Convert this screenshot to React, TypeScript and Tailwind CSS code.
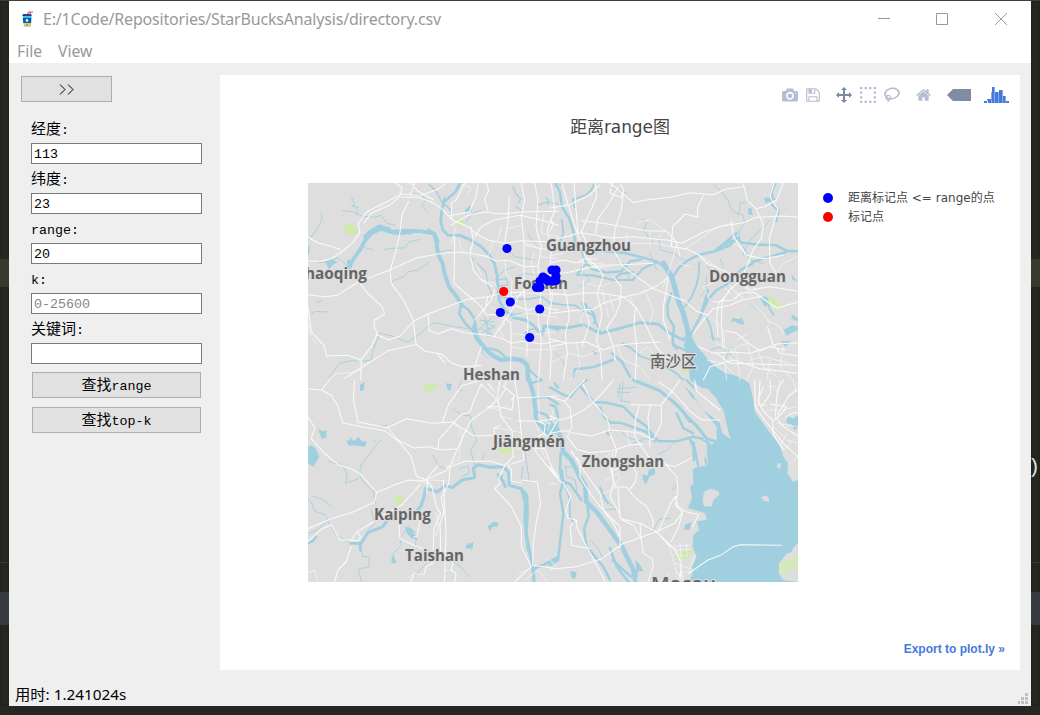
import React from "react";

type Line = [width: number, d: string];
type Tile = { x: number; y: number; water: Line[]; lakes: string; parks: string; roads: string; minor: string };

const northWest: Tile = {
  x: 0,
  y: -3,
  water: [
    [11, "M122 262L140 232L158 206L172 180L190 160L218 146L250 156L300 152L340 154L378 160L386 190L390 222L404 250L410 282L424 322L446 350L462 376"],
    [9, "M362 150L382 165L390 185M170 170L185 155L215 138L245 148M240 155L270 160L310 158"],
    [7, "M462 376L482 390L500 418L503 450M458 378L454 402L472 430L498 456L506 482"],
    [13, "M500 440L506 472L526 500L550 524L580 540L610 536L640 540L658 555L660 600"],
    [6, "M545 505L570 512L592 530M655 560L680 585L700 600"],
    [8, "M456 10L442 36L408 66L402 90L398 120L404 150L420 166L456 166L488 180L520 200L545 226L560 252L568 290L570 330L574 362L590 392L620 414L652 420L676 436L690 452L704 462L708 438L730 442L750 448"],
    [4, "M574 350L610 356L660 358L700 350L722 366L750 372M362 12L384 34L402 66L430 92M404 68L410 52"],
    [3, "M614 20L626 44L638 58L632 68M712 52L724 64L718 74M692 74L718 66L750 72M570 300L595 295L600 314L570 320M650 460L672 446L690 450M600 396L620 404L640 400M480 220L506 250L534 276L540 318L555 350"],
    [2, "M104 92L138 96L160 108L200 112L220 106L236 130L262 136M130 50L140 74L130 78L152 82M140 76L150 96L146 106M0 180L24 152L42 118L40 98M118 258L90 232L60 246L30 248M230 208L270 204L290 204L304 186L336 178M250 304L288 290L300 276L330 270L362 248M160 200L196 210M10 400L22 394L60 396M26 366L44 362"],
    [2, "M60 596L94 550L130 542L158 544L190 540L195 510L216 460L252 468L300 486L330 466L360 440L380 428L430 438L500 450M314 40L342 46L352 60L342 76L360 98M384 222L420 210L438 215M520 460L560 436M514 444L552 464M530 410L540 470M516 420L560 426M510 450L554 410"],
    [2, "M560 300L590 270L620 260M626 290L650 280L690 286M600 210L620 230L680 240M660 160L680 190M640 110L640 90L622 80M470 130L484 112L496 100L520 90M520 500L524 520L540 536M546 448L560 442L536 426L548 470M508 406L490 450"],
  ],
  lakes: "M52 244L72 238L88 246L74 256L62 268ZM116 242L128 238L132 264L120 260ZM470 90L488 76L492 92L474 102ZM0 196L5 200L4 222L0 225Z",
  parks: "M108 138L120 129L138 136L152 150L142 164L126 168L108 152ZM442 118L466 113L468 134L450 138L440 130Z",
  roads:
    "M0 172L30 188L74 200L96 208M0 242L40 244L70 236L100 216L132 190L156 158L150 132L176 96L240 64L280 42L308 44L340 46L390 28L410 12M168 128L190 100L244 76L276 50L282 22L264 10M282 52L330 52L370 66L404 88L432 120L480 140L506 162L540 180L590 190L640 182L750 186M308 44L320 10M302 66L282 104L276 156L262 222L246 270L250 310L288 362L316 420L324 492L352 514L400 522L430 548L462 560L520 556M0 344L52 350L88 346L150 306L192 290L246 270L324 234L390 222L440 216L488 220L540 230L566 244L600 240L650 260L690 258M152 306L180 340L222 380L230 402L200 420L198 440L208 460L190 500L160 538L158 600M208 464L242 480L276 468L316 424L360 402L430 376L480 358L540 350L580 340L650 336M360 402L364 452L390 462L430 446L470 458L540 466L580 474L610 490L640 484L700 492L750 482M322 494L240 512L180 550L150 570L108 596M0 380L10 456L48 496L56 528L120 526L160 540M440 168L438 310L490 354L520 380L534 404L574 404L608 428L610 490L608 540M488 140L496 180L486 220L496 270L520 300L556 320M590 190L600 128L604 52M540 92L530 56L542 34L536 10M510 10L504 50L484 96L420 108M378 60L330 34L310 10M470 10L444 60L430 70L432 120M430 135L480 106L530 96L580 102L640 96L750 94M500 170L520 140L560 120L600 112L636 106L700 120L750 136M560 466L582 432L610 394L630 350L650 330L686 300L720 286L750 286M500 420L526 390L550 360L560 330M540 350L530 390M656 196L700 206L750 210M640 10L650 60L640 110L648 180L648 290L650 360L660 420L656 530M680 10L690 60L684 140L700 200L690 260L700 330L690 420L700 480L692 600M730 10L740 90L718 150L730 210L722 300L730 370L718 430L730 520L726 600M600 370L660 390L700 380L750 390M520 500L500 560L480 600M608 540L606 600M386 520L400 536L410 548",
  minor:
    "M520 300L560 310L580 346L620 350L660 340L750 344M590 240L594 280L612 300L610 350L604 394M610 410L660 400L700 404L750 414M610 460L660 466L740 456M610 500L660 510L750 506M640 300L690 306L750 300M678 220L670 250L680 290M650 190L680 195M700 230L750 236M706 106L700 160L750 170M580 140L570 180M640 135L600 146M460 12L490 24L480 40M444 140L430 190M454 180L460 210L484 226M500 240L520 286M550 380L570 400L590 430L574 450L586 470M0 432L10 470L26 490M150 540L170 554L155 570M58 600L90 580L130 578L158 566M556 184L540 230",
};

const northEast: Tile = {
  x: 242,
  y: -3,
  water: [
    [7, "M16 10L30 36L36 80L58 116L70 154L78 196L100 220L126 218M100 222L160 214L220 218L270 230L318 244L344 260L364 290"],
    [15, "M340 250L352 270L366 292L376 330L386 366L400 400L414 454L414 490L440 510L460 540"],
    [7, "M370 288L388 262L412 242L448 224L500 212L540 196L562 172L574 188L630 194L680 196L708 212L744 214M500 208L526 188L550 166L560 160M525 194L544 182L552 186M608 246L640 236L674 226L708 216"],
    [6, "M100 226L108 250L128 268L170 278L214 274L240 244L274 238M108 250L80 284L128 286L190 300L248 300L278 266L318 246M190 300L210 282L250 276"],
    [8, "M0 440L50 444L100 434L150 460L206 446L270 428L324 432L360 460L400 480"],
    [7, "M364 340L352 374L354 410L372 440L368 486L380 506M432 444L450 412L474 358L500 330L536 310L572 270L608 250M450 412L460 380L474 330M430 450L418 470"],
    [5, "M448 246L446 288L438 320L424 352L404 380M0 370L36 374L74 376L102 394L128 404L150 456M120 384L136 410L132 430M216 490L240 502L270 528L320 546L380 580L400 600"],
    [7, "M676 10L666 34L666 74L686 92L678 124M654 58L672 58M186 520L216 546L240 590M70 590L76 568L128 562L188 540M370 496L400 508L430 520"],
    [5, "M74 82L68 58L106 46L124 30L132 12M36 120L40 160L28 190M650 354L658 384L670 404M468 410L480 436L490 480"],
    [2, "M490 12L514 36L536 64L544 90L566 102L572 70L600 60M560 100L580 106L584 132L568 150L568 180M274 116L290 130L280 150L310 190M470 260L500 280L520 260L510 236M590 360L620 390M480 470L510 480M16 20L40 10M16 520L36 538L44 558M660 120L632 150L600 180L578 226M180 20L230 40M90 270L120 300L90 320M200 236L240 270M300 220L320 270M326 174L332 210L370 220L400 240M470 290L468 330L450 350M580 200L600 240L640 250M480 510L510 500L550 530M220 250L240 300M540 500L520 560"],
  ],
  lakes:
    "M594 86L604 84L608 104L596 104ZM642 54L656 52L662 66L646 68ZM546 414L570 418L574 410L584 434L562 430L556 424L544 426ZM700 450L726 436L744 440V450L722 460L710 468ZM726 404L744 414V424L724 416ZM692 484L724 484L706 500ZM644 346L630 354L644 380L654 374ZM400 470L426 470L440 500L464 528L484 552L506 568L512 600H470L450 550L420 520ZM126 512L144 518L134 526ZM724 284L732 292L740 304L728 300ZM92 366L112 372L116 390L104 392Z",
  parks: "M650 346L670 354L700 378L690 384L656 374L644 356ZM394 572L430 564L440 568L420 580L402 578Z",
  roads:
    "M0 84L60 74L76 66L120 44L150 14M36 10L50 60L72 130L82 160L96 200L106 232L140 258L160 286L142 340L156 400L140 480L152 520L156 600M72 10L80 110L84 160M136 10L140 50L116 106L94 154L110 190L122 230M186 10L180 40L212 52L222 30L212 14M204 20L180 66L144 116L136 160M180 10L230 50L250 68L290 60L360 52L420 38L490 44L526 28L580 20M220 40L214 90L194 150L190 210L220 260L260 290L310 326L356 344L404 362L440 394L470 404M460 46L442 84L444 112L406 102L368 140L364 200L410 206L448 226L470 250L530 276L570 306L600 330L660 320L744 334M0 180L60 168L86 158L128 164L184 174L250 170L320 178L350 180L396 190L460 156L520 138L580 128L620 112L700 108L744 112M96 122L150 128L220 140L290 152L350 154L378 184L390 230M620 90L640 134L634 176L610 208L588 266L566 306L538 330L516 366L514 440L520 506M672 10L660 50L684 90L658 174L660 250L686 290M580 12L592 60L618 86L644 80L680 60L700 10M0 400L70 392L130 388L160 370L220 352L270 340L316 320L356 292M0 340L60 346L100 338L150 340L220 350L256 380L280 420L300 460L318 500L344 530L390 548M0 476L50 490L110 486L160 510L200 496L260 490L330 486M0 500L50 490M524 452L560 460L596 490L630 512L680 492L744 488M490 366L550 360L572 340L610 336L680 384L744 366M504 470L500 410L506 370L538 334M430 460L460 420L490 386L540 376L576 360L640 348M446 500L490 520L540 516L600 520L660 500L706 510M0 250L40 240L80 248L108 236L140 238M0 286L60 276L110 264L160 256L220 254L310 250M190 290L214 320L210 370L196 406L170 444L190 500L196 540M256 386L252 430L260 500L256 600M30 300L50 350L58 410L46 460L52 520L40 600M100 300L100 370L118 430L96 500M0 120L12 130L0 152M354 300L340 380L340 420L360 480M544 124L550 170L590 226L640 236L700 226M652 440L668 490L690 520L744 528M500 520L540 550L620 552L744 556M460 600L480 560L550 540L630 566L744 580",
  minor:
    "M176 200L240 190L310 190L370 200M150 170L160 210M230 164L230 210M300 150L300 200M320 180L344 150L300 120L260 128M100 190L180 190M110 212L160 220M90 248L160 252M110 230L130 264L180 260M100 236L96 286M108 310L150 320L180 310M156 330L176 410M110 386L90 420L104 440M240 350L250 380M284 330L310 390L300 430M380 190L364 250L340 320M386 250L420 260M450 226L500 260L550 330L600 370M540 276L590 320M520 320L560 360M540 320L570 350M560 300L610 350M580 290L620 330M480 410L520 450L524 486M500 490L544 510M540 540L560 500L592 490L610 560L590 600M500 560L530 580M624 510L640 560L680 590M660 540L650 600M700 500L690 560L730 600M650 420L690 440L700 460M740 230L700 250L680 280L690 310M470 540L520 550L550 580M520 520L530 600M560 520L570 600M600 540L640 530L720 550M550 130L500 140L460 170L400 210M0 550L60 520L100 530L150 510M80 490L90 560L60 600M200 496L220 540L270 560L300 600M270 520L290 500L330 540M180 350L190 390M0 228L40 220M8 300L8 360M560 480L590 464M500 306L460 320L480 360M606 370L640 400L660 430M580 210L550 190",
};

const southWest: Tile = {
  x: 0,
  y: 197,
  water: [
    [9, "M322 396L338 380L348 350L352 326L372 330L388 336L410 318L434 322L462 300L500 292L496 264L510 254L544 262L586 260L602 278L604 316L640 326L656 346L658 400L654 460L666 520L676 570L678 606"],
    [8, "M640 326L652 370L650 420L660 510M674 570L690 560L706 556L750 532M570 284L584 302L592 320M166 480L180 458L224 440L236 424M130 490L160 490L172 470M154 488L158 510"],
    [12, "M664 0L676 40L682 86L684 120L704 142L724 158L750 150"],
    [7, "M668 10L700 0M686 54L716 50L750 72M690 96L714 104L734 134L750 146M0 490L16 482L24 470M740 10L750 22"],
    [2, "M220 178L190 216L160 252L154 282L164 304L196 334L204 372M62 244L104 256L118 286L112 310L152 296M434 86L460 104L488 108L490 140L506 180L488 210L500 254M460 0L450 26L464 34M376 226L390 256L416 268M0 356L14 374L20 394L50 404L70 440L86 466L110 480L130 492M14 348L52 362L68 380M190 390L200 430L180 450M260 546L256 520L280 494L276 476L300 440L326 460L322 500L352 510M314 592L330 576L356 550M430 540L462 564L482 588M158 500L164 530L184 530L182 560L152 568L160 606M0 462L26 450L60 422M454 266L480 258L484 280L460 290M644 260L640 300L650 304M648 200L656 250L664 306M216 142L236 136M200 190L200 180M480 490L490 510M522 240L530 224"],
  ],
  lakes:
    "M0 200L10 196L24 206L34 230L16 260L0 250ZM30 148L46 154L56 150L54 172L42 178ZM114 182L128 180L122 168L138 184L152 170L160 182L176 186L170 200L138 196L124 198ZM156 14L170 6L168 30L156 34ZM414 10L432 12L426 34L418 26ZM538 440L556 426L572 428L568 440L554 440L546 454ZM472 496L496 486L494 504L476 506ZM252 526L266 544L258 552L250 546ZM290 440L312 446L318 460L330 480L310 474L298 462ZM700 130L732 134L750 140V160L720 168L700 150ZM590 286L568 284L570 298Z",
  parks: "M348 18L372 6L392 20L364 34L354 46ZM258 352L272 342L288 344L282 362L286 372L262 372ZM572 202L618 204L614 220L576 220Z",
  roads:
    "M0 26L40 30L70 46L88 74L104 128L160 140L230 152L276 188L310 230L326 290L356 300L372 322L386 382L398 400L378 446L376 510M140 0L136 60L150 126L200 136L236 144L296 116L370 130L434 126L498 168L560 166M66 0L40 30M0 112L20 142L10 176L52 222L90 254L130 266L154 280L206 336L200 366L130 398L66 418L0 446M206 338L260 314L304 300L340 304L370 292L414 272L426 258L464 170L490 120L540 86L566 60L570 36L576 0M240 144L270 180L318 204L360 200L400 210L450 206M0 484L40 448L70 434L96 480L130 480L146 456L190 430L240 396L280 376L338 312M130 500L114 546L90 570L80 606M130 480L150 484L158 470L148 456M404 126L420 76L460 18L520 0M390 208L392 180L430 136L460 104L486 96L498 60L520 12L566 60M426 264L422 310L400 354L408 396L396 430L398 530M406 300L410 380L414 450L410 606M390 256L360 290L356 336M340 410L326 470L318 470M436 540L430 570L444 580L440 606M418 264L470 244L550 244L590 258L572 294L576 310L560 326L610 380L640 440L640 500L670 560L620 606M640 300L688 306L698 370L686 420L676 490L674 556L750 566M600 254L610 270L610 304L640 308M570 60L580 110L612 152L616 230L590 256M620 0L630 60L636 120L640 160L648 240L610 252M560 166L558 146L576 136M536 80L576 80L612 90L618 46L584 16M594 0L590 30L568 66M540 10L560 36M630 54L676 52L750 48M630 122L690 124L740 116M690 124L712 134L708 160L690 170L680 210L714 254L744 290M706 160L720 170L750 120M650 200L710 206L730 260L750 290M610 60L620 48M320 580L308 606M350 580L354 560L376 548M270 400L276 476L350 510",
  minor:
    "M434 126L468 164L456 196L452 240L412 262M366 300L410 302M344 294L374 320M330 300L358 310M540 80L570 90L600 76M572 106L610 118M556 144L600 150L640 158M570 182L610 182M650 200L690 206M680 120L692 156M690 0L694 110M700 206L712 238M630 580L660 570M650 600L690 570L720 606M0 578L20 570L30 606M318 580L350 584M320 582L300 594M408 570L434 574M384 400L392 440L384 470M608 196L650 214M736 90L720 150M466 172L448 160",
};

const southEast: Tile = {
  x: 242,
  y: 197,
  water: [
    [13, "M-16 150L20 148L30 166L40 216L64 240L84 280L106 316L108 364L140 396L180 450L216 500L250 570L256 606"],
    [7, "M32 220L30 270L38 310L30 340L40 400L24 540L0 555M40 305L60 312L94 360M110 340L116 410L102 446L110 500L160 560L180 600M188 540L220 570L244 590M180 504L200 560L236 606"],
    [7, "M0 22L40 44L60 52L92 12L110 0M88 16L130 66L170 68L220 80L250 110L288 138L312 170L326 184L380 184L430 170L458 176M150 82L162 110L182 128L210 128L290 156L314 184M420 178L430 200L432 240"],
    [9, "M280 12L330 32L380 74L410 108L440 138L470 176L494 184M250 0L300 20"],
    [7, "M380 100L400 144L430 160M0 74L16 80L24 110L20 150M410 0L454 48L496 104M400 96L420 126M430 186L444 254"],
    [5, "M46 320L58 352L60 410L72 430M36 270L40 300L50 330M150 322L160 346L174 370M164 430L190 456L210 500M262 550L260 590M456 190L470 258"],
    [2, "M200 36L240 38M202 26L260 22M210 10L206 54M220 4L214 64M210 62L240 66M48 262L70 260L90 306M46 258L50 290L76 300L80 330M120 480L140 500L160 536M150 350L190 380M170 390L200 386M366 330L382 316M306 460L326 418L360 414M324 222L350 212L374 186M210 150L234 174L280 184M74 230L90 250L110 260M250 190L280 176L320 180"],
  ],
  lakes:
    "M400 -110L414 -60L420 0L454 22L498 52L516 90L528 130L540 176L516 156L508 126L472 100L452 76L424 50L404 20L384 0L430 44L456 86L500 140L500 180L486 194L470 180L454 180L470 190L474 258L440 260L428 270L430 312L420 318L426 354L414 384L466 400L470 420L440 424L448 450L430 464L428 500L440 530L426 560L406 606H744V300L730 306L712 280L714 250L700 230L690 198L654 150L614 96L610 60L598 10L570 -8L530 -20L506 -36L484 -50L456 -84L430 -110ZM278 282L292 288L296 270L314 264L316 282L298 290L288 314L278 300ZM404 436L424 426L420 448L404 450ZM714 108L728 116L744 104V142L734 150L726 134L708 128ZM166 152L184 152L180 168L170 164ZM60 574L80 576L76 596L64 592ZM256 540L270 554L280 574L260 574Z",
  parks: "M374 532L390 520L416 508L426 514L416 530L388 540Z",
  roads:
    "M0 50L44 64L60 84L66 140L52 170L80 208L120 218L186 212L240 194L280 192M0 108L30 120L64 110L96 94L130 68L164 32L190 0M44 64L84 20L104 0M60 152L34 154L0 160M64 158L124 168L180 150L230 154L270 160L310 180L334 132L334 74L370 28L390 0M180 150L172 116L120 56L100 14M268 74L256 120L254 170L272 196L296 230L344 250L380 290L384 330L376 376L398 396L374 430L326 452L268 474L216 492L156 536L80 560L0 568M302 74L294 110L300 200M240 74L334 76M64 212L100 270L150 340L160 390L210 440L210 504M64 216L90 246L90 290L120 340L190 430L210 470M176 150L200 210L186 260L190 310L180 350L208 400L212 416L270 430L320 456L360 500M188 218L180 260L196 320L230 322L256 354L290 380L310 420L308 442M204 326L210 410M186 270L230 260L250 262L260 280L256 306L240 328M350 254L374 260L424 234M376 350L384 380L410 396L446 404L428 440M398 396L386 440L364 484M270 430L274 480L280 520L306 536L310 560L294 606M0 262L30 304L40 308L62 350L48 390L54 414L80 420L80 440L110 500L132 540L166 606M80 420L60 440L66 496L120 506M216 420L250 436L270 470M320 456L376 510L394 550L390 600M416 580L474 540L512 526L550 500L570 494L694 496M434 0L440 34L510 90M324 6L360 28L400 70L420 94L456 120L510 120M376 350L362 370L340 420L324 454M640 20L624 60L640 94L668 120L670 164L700 208M614 0L616 80L640 116L668 150L700 190L744 230M660 0L662 40L636 76M700 0L682 30L676 110L700 140L744 168M740 30L716 48L684 104M710 110L730 98L744 100M630 0L626 74M672 120L696 100L710 80L660 72",
  minor:
    "M370 498L420 496M374 510L420 508M376 520L400 528M390 490L394 540M410 490L410 530M360 500L380 580L400 590M376 550L420 566L434 526M384 580L426 574M390 560L400 606M396 570L380 606M0 310L20 312M168 300L204 280L210 294L190 324M160 340L206 320M150 250L180 220M230 154L240 200M0 540L20 560M340 600L360 580M656 20L680 20M690 0L684 40M730 0L740 36M614 76L650 76M650 90L690 90M670 140L710 180L744 190M680 130L744 140M690 200L710 160M700 210L726 186M720 250L744 232M740 80L700 90M490 80L480 64M494 110L504 120",
};

const tiles = [northWest, northEast, southWest, southEast];

const islands =
  "M462 336L480 326L506 334L508 344L490 360L484 380L462 378L458 360ZM632 352L646 346L656 352L658 366L642 362ZM712 520L724 516L732 500L744 490V606L700 600L686 580L688 548ZM432 22L474 26L500 60L520 90L540 176L518 160L510 120L460 92L432 50ZM444 182L460 186L466 232L456 238ZM378 566L398 552L430 566L424 590L412 606H376ZM684 250L694 250L690 266L680 262ZM724 392L728 396L724 398Z";

const labels: [string, number, number, number][] = [
  ["Zhaoqing", -12, 96, 71],
  ["Guangzhou", 238, 68, 85],
  ["Foshan", 206, 105.5, 54],
  ["Dongguan", 401, 98.5, 77],
  ["Heshan", 155, 197, 57],
  ["Jiāngmén", 185, 264, 72],
  ["Zhongshan", 274, 283.5, 82],
  ["Kaiping", 66, 337, 57],
  ["Taishan", 97, 377.5, 59],
];

const stores: [number, number][] = [
  [199, 65.5], [202.3, 119], [192.3, 129.5], [231.7, 126], [221.7, 154.5],
  [244, 87], [248, 87], [235, 94], [240, 98], [248, 93], [248, 97.5],
  [232, 98], [228.5, 104.5], [232, 104.5], [244, 98], [238, 96],
];

function CityMap() {
  return (
    <svg className="block h-[399px] w-[490px] bg-[#dedede]" viewBox="0 0 490 399" fill="none" strokeLinejoin="round" strokeLinecap="round">
      {tiles.map((t, i) => (
        <g key={i} transform={`translate(${t.x} ${t.y}) scale(.33333)`}>
          <path d={t.parks} fill="#d0eaae" />
          {t.water.map(([w, d], j) => (
            <path key={j} d={d} stroke="#a0cfdf" strokeWidth={w + 0.5} />
          ))}
          <path d={t.lakes} fill="#a0cfdf" />
        </g>
      ))}
      <g transform="translate(242 197) scale(.33333)">
        <path d={islands} fill="#dedede" />
        <path d="M690 550L720 536L744 528V572L724 564L704 586L686 572Z" fill="#d2e9ba" />
        <path d={southEast.parks} fill="#d0eaae" />
      </g>
      {tiles.map((t, i) => (
        <g key={i} transform={`translate(${t.x} ${t.y}) scale(.33333)`} stroke="#fafafa">
          <path d={t.minor} strokeWidth="2.2" opacity=".85" />
          <path d={t.roads} strokeWidth="3.2" />
        </g>
      ))}
      <g fill="#666" stroke="#dedede" strokeWidth="2" paintOrder="stroke" fontFamily="'Open Sans', sans-serif" fontSize="16" fontWeight="700">
        {labels.map(([name, x, y, w]) => (
          <text key={name} x={x} y={y} textLength={w} lengthAdjust="spacingAndGlyphs">{name}</text>
        ))}
        <text x="342" y="184" fontFamily="'Noto Sans CJK SC', sans-serif" fontSize="15.5" fontWeight="500">南沙区</text>
        <text x="343" y="407.5" fontSize="19" fontWeight="600" textLength="65" lengthAdjust="spacingAndGlyphs">Macau</text>
      </g>
      {stores.map(([x, y], i) => (
        <circle key={i} cx={x} cy={y} r="4.6" fill="#00f" />
      ))}
      <circle cx="195.7" cy="108.5" r="4.6" fill="#f00" />
    </svg>
  );
}

const glyphs = {
  camera: "m500 450c-83 0-150-67-150-150 0-83 67-150 150-150 83 0 150 67 150 150 0 83-67 150-150 150z m400 150h-120c-16 0-34 13-39 29l-31 93c-6 15-23 28-40 28h-340c-16 0-34-13-39-28l-31-94c-6-15-23-28-40-28h-120c-55 0-100-45-100-100v-450c0-55 45-100 100-100h800c55 0 100 45 100 100v450c0 55-45 100-100 100z m-400-550c-138 0-250 112-250 250 0 138 112 250 250 250 138 0 250-112 250-250 0-138-112-250-250-250z m365 380c-19 0-35 16-35 35 0 19 16 35 35 35 19 0 35-16 35-35 0-19-16-35-35-35z",
  disk: "m214-7h429v214h-429v-214z m500 0h72v500q0 8-6 21t-11 20l-157 156q-5 6-19 12t-22 5v-232q0-22-15-38t-38-16h-322q-22 0-37 16t-16 38v232h-72v-714h72v232q0 22 16 38t37 16h465q22 0 38-16t15-38v-232z m-214 518v178q0 8-5 13t-13 5h-107q-7 0-13-5t-5-13v-178q0-8 5-13t13-5h107q7 0 13 5t5 13z m357-18v-518q0-22-15-38t-38-16h-750q-23 0-38 16t-16 38v750q0 22 16 38t38 16h517q23 0 50-12t42-26l156-157q16-15 27-42t11-49z",
  pan: "m1000 350l-187 188 0-125-250 0 0 250 125 0-188 187-187-187 125 0 0-250-250 0 0 125-188-188 186-187 0 125 252 0 0-250-125 0 187-188 188 188-125 0 0 250 250 0 0-126 187 188z",
  select: "M0 850h143v-143h-143zM286 850h143v-143h-143zM571 850h143v-143h-143zM857 850h143v-143h-143zM0 564h143v-143h-143zM857 564h143v-143h-143zM0 279h143v-143h-143zM857 279h143v-143h-143zM0-7h143v-143h-143zM286-7h143v-143h-143zM571-7h143v-143h-143zM857-7h143v-143h-143z",
  lasso: "m1018 538c-36 207-290 336-568 286-277-48-473-256-436-463 10-57 36-108 76-151-13-66 11-137 68-183 34-28 75-41 114-42l-55-70 0 0c-2-1-3-2-4-3-10-14-8-34 5-45 14-11 34-8 45 4 1 1 2 3 2 5l0 0 113 140c16 11 31 24 45 40 4 3 6 7 8 11 48-3 100 0 151 9 278 48 473 255 436 462z m-624-379c-80 14-149 48-197 96 42 42 109 47 156 9 33-26 47-66 41-105z m-187-74c-19 16-33 37-39 60 50-32 109-55 174-68-42-25-95-24-135 8z m360 75c-34-7-69-9-102-8 8 62-16 128-68 170-73 59-175 54-244-5-9 20-16 40-20 61-28 159 121 317 333 354s407-60 434-217c28-159-121-318-333-355z",
  home: "m786 296v-267q0-15-11-26t-25-10h-214v214h-143v-214h-214q-15 0-25 10t-11 26v267q0 1 0 2t0 2l321 264 321-264q1-1 1-4z m124 39l-34-41q-5-5-12-6h-2q-7 0-12 3l-386 322-386-322q-7-4-13-4-7 2-12 7l-35 41q-4 5-3 13t6 12l401 334q18 15 42 15t43-15l136-114v109q0 8 5 13t13 5h107q8 0 13-5t5-13v-227l122-102q5-5 6-12t-4-13z",
  tag: "m375 725l0 0-375-375 375-374 0-1 1125 0 0 750-1125 0z",
};

function Glyph({ d, w, className }: { d: string; w: number; className: string }) {
  return (
    <svg className={`h-4 shrink-0 ${className}`} viewBox={`0 0 ${w} 1000`} fill="currentColor">
      <path transform="matrix(1 0 0 -1 0 850)" d={d} />
    </svg>
  );
}

function ModeBar() {
  return (
    <div className="flex h-4 pl-[562px] text-[#b5bdd3]">
      <Glyph d={glyphs.camera} w={1000} className="w-4" />
      <Glyph d={glyphs.disk} w={857} className="ml-2 w-[14px]" />
      <Glyph d={glyphs.pan} w={1000} className="ml-4 w-4 text-[#7b88a3]" />
      <Glyph d={glyphs.select} w={1000} className="ml-2 w-4" />
      <Glyph d={glyphs.lasso} w={1031} className="ml-2 w-4" />
      <Glyph d={glyphs.home} w={928} className="ml-4 w-[15px]" />
      <Glyph d={glyphs.tag} w={1500} className="ml-4 w-6 text-[#7f8ca6]" />
      <svg className="ml-[13px] h-4 w-[25px] shrink-0" viewBox="0 0 25 16">
        <path fill="#8aabea" d="M3 12h1v2H3zM7 5h1v11H7zM10 0h1v16h-1zM14 5h1v11h-1zM18 3h1v13h-1zM21 9h1v7h-1z" />
        <path fill="#447adb" d="M0 14h3v2H0zM4 12h3v4H4zM8 0h2v16H8zM11 5h3v11h-3zM15 3h3v13h-3zM19 9h2v7h-2zM22 14h3v2h-3z" />
      </svg>
    </div>
  );
}

function CupIcon() {
  return (
    <svg className="h-4 w-3 shrink-0" viewBox="0 0 12 16">
      <path d="M5.5 4L6 2L11 .8M7 .5L9 2.5" stroke="#f0506e" strokeWidth="1.1" fill="none" />
      <path d="M1 3h8l1 2.2H.2z" fill="#26468c" />
      <path d="M1 5.2h8.4L8.6 15.5H2z" fill="#16c8e8" />
      <path d="M.8 7h8.6l-.3 5H1.3z" fill="#0755ba" />
      <path d="M2 12h6.7l-.3 3.5H2.2z" fill="#ffc83c" />
      <circle cx="5" cy="9.5" r="1.4" fill="#e7f3ff" />
      <path d="M4 13h2v1.5H4z" fill="#23c9df" />
    </svg>
  );
}

function Mixed({ cjk, latin }: { cjk?: string; latin?: string }) {
  return (
    <span className="flex items-baseline whitespace-pre font-['Liberation_Mono','Noto_Sans_CJK_SC',monospace] text-[13.33px] leading-5">
      {cjk && <span className="font-['Noto_Sans_CJK_SC',sans-serif] text-[15px] leading-5">{cjk}</span>}
      {latin}
    </span>
  );
}

const fields: { cjk?: string; latin: string; value?: string; placeholder?: string }[] = [
  { cjk: "经度", latin: ":", value: "113" },
  { cjk: "纬度", latin: ":", value: "23" },
  { latin: "range:", value: "20" },
  { latin: "k:", placeholder: "0-25600" },
  { cjk: "关键词", latin: ":" },
];

const buttonLook = "flex h-[26px] items-center justify-center border border-[#adadad] bg-[#e1e1e1] text-black";

function Sidebar() {
  return (
    <aside className="w-[211px] shrink-0 pl-3 pt-[13px]">
      <button className={`w-[91px] ${buttonLook}`}>
        <svg className="h-[11px] w-[15px]" viewBox="0 0 15 11" fill="none" stroke="#000">
          <path d="M1 .5L6 5.5L1 10.5M9 .5L14 5.5L9 10.5" />
        </svg>
      </button>
      <div className="ml-[10px] mt-3 flex w-[171px] flex-col">
        {fields.map((f) => (
          <label key={(f.cjk ?? "") + f.latin} className={`flex h-[50px] flex-col justify-between text-black ${f.cjk ? "pt-1" : "pt-[7px]"}`}>
            <Mixed cjk={f.cjk} latin={f.latin} />
            <input
              className="h-[21px] w-full border border-[#7a7a7a] bg-white px-[2px] pt-[2px] font-['Liberation_Mono',monospace] text-[13.33px] leading-[17px] placeholder:text-[#858585]"
              defaultValue={f.value}
              placeholder={f.placeholder}
            />
          </label>
        ))}
        <button className={`ml-px mt-2 w-[169px] ${buttonLook}`}><Mixed cjk="查找" latin="range" /></button>
        <button className={`ml-px mt-[9px] w-[169px] ${buttonLook}`}><Mixed cjk="查找" latin="top-k" /></button>
      </div>
    </aside>
  );
}

function ChartPanel() {
  return (
    <main className="flex h-[595px] w-[800px] flex-col bg-white pt-3 font-['DejaVu_Sans','Noto_Sans_CJK_SC',sans-serif] text-[#444]">
      <ModeBar />
      <h1 className="mt-3 h-6 text-center text-[17px] leading-6 tracking-[-0.1px]">距离range图</h1>
      <div className="mt-[44px] flex pl-[88px]">
        <CityMap />
        <ul className="ml-[25px] mt-[6px] whitespace-nowrap text-[12px] leading-[19px]">
          <li className="flex items-center gap-[15px]"><i className="-mt-0.5 size-[10px] rounded-full bg-[#00f]" />距离标记点 &lt;= range的点</li>
          <li className="flex items-center gap-[15px]"><i className="-mt-0.5 size-[10px] rounded-full bg-[#f00]" />标记点</li>
        </ul>
      </div>
      <a className="mt-auto mb-3 mr-[15px] self-end font-['Liberation_Sans',sans-serif] text-[12px] font-bold leading-[18px] text-[#447adb]">Export to plot.ly »</a>
    </main>
  );
}

function Backdrop({ code }: { code?: string }) {
  return (
    <div className="flex w-[9px] shrink-0 flex-col pt-[258px] shadow-[inset_0_0_3px_#1c1d19]">
      <div className="h-7 bg-[#3a392d]" />
      <div className="h-[275px] pt-[169px]">
        <span className="-ml-[3px] block w-3 font-['Liberation_Mono',monospace] text-[20px] leading-6 text-[#e4e4dc]">{code}</span>
      </div>
      <div className="h-px bg-[#3b3b35]" />
      <div className="mt-[29px] h-[33px] bg-[#373b40]" />
    </div>
  );
}

export default function App() {
  return (
    <div className="flex h-[715px] w-[1040px] flex-col overflow-hidden bg-[#262722]">
      <div className="h-px shrink-0 bg-[#3b3a3c]" />
      <div className="flex h-[705px]">
        <Backdrop />
        <div className="flex w-[1022px] shrink-0 flex-col bg-[#efefef]">
          <header className="h-[62px] bg-white font-['Noto_Sans',sans-serif] text-[#999]">
            <div className="flex h-9 items-center pl-[13px]">
              <CupIcon />
              <span className="ml-[9px] text-[16px] tracking-[-0.18px]">E:/1Code/Repositories/StarBucksAnalysis/directory.csv</span>
              <svg className="ml-auto mr-6 h-3 w-[129px]" viewBox="0 0 129 12" fill="none" stroke="#999">
                <path d="M0 5.5H12M58.5.5H69.5V11.5H58.5ZM117 0L129 12M129 0L117 12" />
              </svg>
            </div>
            <nav className="flex gap-4 pl-2 text-[15.7px] leading-[29px]"><span>File</span><span>View</span></nav>
          </header>
          <div className="flex">
            <Sidebar />
            <div className="pt-3"><ChartPanel /></div>
          </div>
          <footer className="flex flex-1 items-end justify-between pl-[6px] pr-[3px] font-['Noto_Sans','Noto_Sans_CJK_SC',sans-serif] text-[15.3px] leading-[23px] text-black">
            <span>用时: 1.241024s</span>
            <svg className="mb-[2px] h-[11px] w-[10px]" viewBox="0 0 10 11" fill="#bfbfbf">
              <path d="M7 0h3v3H7zM3 4h3v3H3zM7 4h3v3H7zM0 8h2v3H0zM3 8h3v3H3zM7 8h3v3H7z" />
            </svg>
          </footer>
        </div>
        <Backdrop code=")" />
      </div>
    </div>
  );
}
